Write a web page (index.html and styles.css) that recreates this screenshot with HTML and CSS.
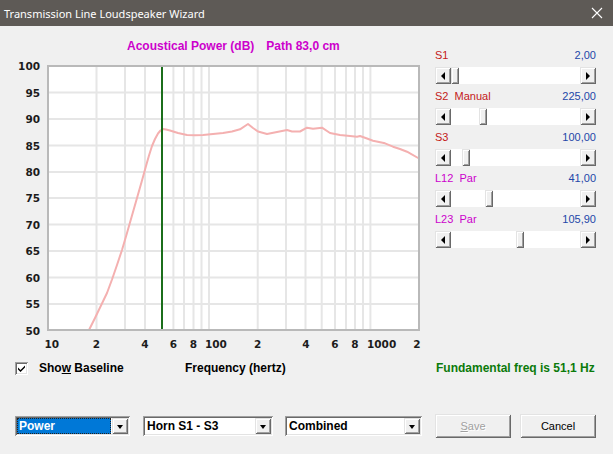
FILE: index.html
```html
<!DOCTYPE html>
<html>
<head>
<meta charset="utf-8">
<title>Transmission Line Loudspeaker Wizard</title>
<link rel="stylesheet" href="styles.css">
</head>
<body>
<div class="window">
  <div class="titlebar">
    <span class="title">Transmission Line Loudspeaker Wizard</span>
    <svg class="close" width="12" height="12" viewBox="0 0 12 12"><path d="M1 1L11 11M11 1L1 11" stroke="#fff" stroke-width="1.1" fill="none"/></svg>
  </div>

  <div class="top">
    <div class="chart-col">
      <div class="chart-title">Acoustical Power (dB)<span class="path">Path 83,0 cm</span></div>
      <svg class="chart" width="430" height="302" viewBox="0 56 430 302">
        <rect x="48" y="66" width="371" height="264" fill="#ffffff"/>
        <g stroke="#e6e6e6" stroke-width="2">
          <line x1="48" y1="92.5" x2="419" y2="92.5"/>
          <line x1="48" y1="119" x2="419" y2="119"/>
          <line x1="48" y1="145.5" x2="419" y2="145.5"/>
          <line x1="48" y1="172" x2="419" y2="172"/>
          <line x1="48" y1="198" x2="419" y2="198"/>
          <line x1="48" y1="224.5" x2="419" y2="224.5"/>
          <line x1="48" y1="251" x2="419" y2="251"/>
          <line x1="48" y1="277.5" x2="419" y2="277.5"/>
          <line x1="48" y1="304" x2="419" y2="304"/>
          <line x1="96.5" y1="66" x2="96.5" y2="330"/>
          <line x1="125" y1="66" x2="125" y2="330"/>
          <line x1="145" y1="66" x2="145" y2="330"/>
          <line x1="173.4" y1="66" x2="173.4" y2="330"/>
          <line x1="184" y1="66" x2="184" y2="330"/>
          <line x1="193.5" y1="66" x2="193.5" y2="330"/>
          <line x1="201.5" y1="66" x2="201.5" y2="330"/>
          <line x1="209" y1="66" x2="209" y2="330"/>
          <line x1="257.7" y1="66" x2="257.7" y2="330"/>
          <line x1="286" y1="66" x2="286" y2="330"/>
          <line x1="305.5" y1="66" x2="305.5" y2="330"/>
          <line x1="321.7" y1="66" x2="321.7" y2="330"/>
          <line x1="335" y1="66" x2="335" y2="330"/>
          <line x1="346" y1="66" x2="346" y2="330"/>
          <line x1="355" y1="66" x2="355" y2="330"/>
          <line x1="363" y1="66" x2="363" y2="330"/>
          <line x1="370.4" y1="66" x2="370.4" y2="330"/>
        </g>
        <polyline fill="none" stroke="#f4b0b0" stroke-width="2" stroke-linejoin="round"
          points="89,330 95,318 101,305.5 107,293 112,279.5 117,265 122,250 127,233 132,215.5 137,198 142,180.5 146,166 149,155.5 152,146 155,139 158,133.5 160.5,130.5 163,129 166,129.5 170,130.5 178,133 187,135 195,135.3 203,135 213,134 223,133 232,131.5 240,129.3 248,124 253,128 258,131.5 267,134 277,132 287,130 292,131.5 300,131.5 307,127.7 313,128.7 322,127.7 330,133 340,135 350,136 357,136.7 360,136 367,138.5 373,140.7 385,143.3 393,146.7 400,149 407,151.7 419,158.5"/>
        <line x1="162" y1="67" x2="162" y2="330" stroke="#1b6e1b" stroke-width="2"/>
        <rect x="48" y="66" width="371" height="264" fill="none" stroke="#b9b9b9" stroke-width="2"/>
        <g class="axis" text-anchor="end">
          <text x="40" y="70">100</text>
          <text x="40" y="96.5">95</text>
          <text x="40" y="123">90</text>
          <text x="40" y="149.5">85</text>
          <text x="40" y="176">80</text>
          <text x="40" y="202">75</text>
          <text x="40" y="228.5">70</text>
          <text x="40" y="255">65</text>
          <text x="40" y="281.5">60</text>
          <text x="40" y="308">55</text>
          <text x="40" y="334.5">50</text>
        </g>
        <g class="axis">
          <text x="44.5" y="348">10</text>
          <text x="96.5" y="348" text-anchor="middle">2</text>
          <text x="145" y="348" text-anchor="middle">4</text>
          <text x="173.5" y="348" text-anchor="middle">6</text>
          <text x="193.5" y="348" text-anchor="middle">8</text>
          <text x="205" y="348">100</text>
          <text x="257.7" y="348" text-anchor="middle">2</text>
          <text x="306" y="348" text-anchor="middle">4</text>
          <text x="335" y="348" text-anchor="middle">6</text>
          <text x="355" y="348" text-anchor="middle">8</text>
          <text x="367" y="348">1000</text>
          <text x="417" y="348" text-anchor="middle">2</text>
        </g>
      </svg>
    </div>

    <div class="sliders">
      <div class="slider">
        <div class="slabel"><span class="name red">S1</span><span class="val">2,00</span></div>
        <div class="sb"><div class="sb-btn left"></div><div class="track"><div class="thumb" style="left:0px"></div></div><div class="sb-btn right"></div></div>
      </div>
      <div class="slider">
        <div class="slabel"><span class="name red">S2&nbsp; Manual</span><span class="val">225,00</span></div>
        <div class="sb"><div class="sb-btn left"></div><div class="track"><div class="thumb" style="left:28px"></div></div><div class="sb-btn right"></div></div>
      </div>
      <div class="slider">
        <div class="slabel"><span class="name red">S3</span><span class="val">100,00</span></div>
        <div class="sb"><div class="sb-btn left"></div><div class="track"><div class="thumb" style="left:11px"></div></div><div class="sb-btn right"></div></div>
      </div>
      <div class="slider">
        <div class="slabel"><span class="name mag">L12&nbsp; Par</span><span class="val">41,00</span></div>
        <div class="sb"><div class="sb-btn left"></div><div class="track"><div class="thumb" style="left:34px"></div></div><div class="sb-btn right"></div></div>
      </div>
      <div class="slider">
        <div class="slabel"><span class="name mag">L23&nbsp; Par</span><span class="val">105,90</span></div>
        <div class="sb"><div class="sb-btn left"></div><div class="track"><div class="thumb" style="left:65px"></div></div><div class="sb-btn right"></div></div>
      </div>
    </div>
  </div>

  <div class="info">
    <div class="check"><svg width="9" height="9" viewBox="0 0 9 9"><path d="M1 3.5L3.5 6L8 1.5V3.5L3.5 8L1 5.5Z" fill="#000"/></svg></div>
    <span class="show">Sho<u>w</u> Baseline</span>
    <span class="freq">Frequency (hertz)</span>
    <span class="fund">Fundamental freq is 51,1 Hz</span>
  </div>

  <div class="bottom">
    <div class="combo c1 sel"><span class="combo-text">Power</span><span class="combo-btn"></span></div>
    <div class="combo c2"><span class="combo-text">Horn S1 - S3</span><span class="combo-btn"></span></div>
    <div class="combo c3"><span class="combo-text">Combined</span><span class="combo-btn"></span></div>
    <div class="button save disabled"><span><u>S</u>ave</span></div>
    <div class="button cancel">Cancel</div>
  </div>
</div>
</body>
</html>
```

FILE: styles.css
```css
* { box-sizing: border-box; }
html, body { margin: 0; padding: 0; }
body {
  width: 613px;
  height: 454px;
  overflow: hidden;
  background: #f0f0f0;
  font-family: "Liberation Sans", Arial, sans-serif;
  font-size: 11px;
  color: #000;
}
.window { width: 613px; height: 454px; }

.titlebar {
  height: 26px;
  background: #5e5a56;
  color: #fff;
  display: flex;
  align-items: center;
  justify-content: space-between;
  padding: 0 10px 0 4px;
  font-family: "Noto Sans", "Liberation Sans", sans-serif;
  font-size: 11px;
}
.close { display: block; }

.top { display: flex; }
.chart-col { width: 430px; padding-top: 12px; }
.chart-title {
  height: 18px;
  line-height: 16px;
  padding-left: 127px;
  color: #cc00cc;
  font-weight: bold;
  font-size: 12px;
}
.chart-title .path { margin-left: 12px; }
.chart { display: block; }
.axis {
  font-family: "DejaVu Sans", sans-serif;
  font-weight: bold;
  font-size: 10.5px;
  fill: #1c1c1c;
}

.sliders {
  margin-left: 5px;
  width: 161px;
  padding-top: 22px;
  display: flex;
  flex-direction: column;
  gap: 5px;
}
.slabel {
  display: flex;
  justify-content: space-between;
  height: 14px;
  line-height: 14px;
  margin-bottom: 5px;
  font-size: 11px;
}
.red { color: #c41a1a; }
.mag { color: #cc00cc; }
.val { color: #2347a8; }

.sb { display: flex; height: 17px; }
.sb-btn, .thumb, .combo-btn, .button {
  background: #f0f0f0;
  box-shadow: inset 1px 1px #e3e3e3, inset -1px -1px #696969, inset 2px 2px #ffffff, inset -2px -2px #a0a0a0;
}
.sb-btn {
  width: 16px;
  height: 17px;
  display: flex;
  align-items: center;
  justify-content: center;
}
.sb-btn.left::before {
  content: "";
  border-top: 4px solid transparent;
  border-bottom: 4px solid transparent;
  border-right: 4px solid #000;
  margin-left: -1px;
}
.sb-btn.right::before {
  content: "";
  border-top: 4px solid transparent;
  border-bottom: 4px solid transparent;
  border-left: 4px solid #000;
}
.track { flex: 1; position: relative; background: #ffffff; }
.thumb { position: absolute; top: 0; width: 8px; height: 17px; }

.info {
  display: flex;
  align-items: center;
  height: 20px;
  padding-left: 15px;
  font-weight: bold;
  font-size: 12px;
}
.check {
  width: 13px;
  height: 13px;
  background: #fff;
  box-shadow: inset 1px 1px #a0a0a0, inset -1px -1px #ffffff, inset 2px 2px #696969, inset -2px -2px #e3e3e3;
  display: flex;
  align-items: center;
  justify-content: center;
  margin-right: 11px;
}
.check svg { display: block; }
.show { width: 146px; }
.freq { width: 251px; }
.fund { color: #0b7a0b; }

.bottom {
  display: flex;
  align-items: center;
  height: 24px;
  margin-top: 36px;
  padding-left: 15px;
}
.combo {
  height: 20px;
  display: flex;
  align-items: stretch;
  background: #fff;
  box-shadow: inset 1px 1px #a0a0a0, inset -1px -1px #ffffff, inset 2px 2px #696969, inset -2px -2px #e3e3e3;
  padding: 2px;
  font-weight: bold;
  font-size: 12px;
}
.c1 { width: 115px; }
.c2 { width: 130px; margin-left: 13px; }
.c3 { width: 137px; margin-left: 12px; }
.combo-text {
  flex: 1;
  line-height: 16px;
  padding-left: 2px;
  white-space: nowrap;
  overflow: hidden;
}
.sel .combo-text {
  background: #0078d7;
  color: #fff;
  outline: 1px dotted #222;
  outline-offset: -1px;
  margin-right: 1px;
}
.combo-btn {
  width: 16px;
  height: 16px;
  display: flex;
  align-items: center;
  justify-content: center;
}
.combo-btn::before {
  content: "";
  border-left: 3.5px solid transparent;
  border-right: 3.5px solid transparent;
  border-top: 4px solid #000;
  margin-top: 1px;
}

.button {
  width: 76px;
  height: 24px;
  display: flex;
  align-items: center;
  justify-content: center;
  font-size: 11px;
}
.save { margin-left: 13px; }
.cancel { margin-left: 9px; }
.disabled { color: #a0a0a0; text-shadow: 1px 1px #ffffff; }
```
